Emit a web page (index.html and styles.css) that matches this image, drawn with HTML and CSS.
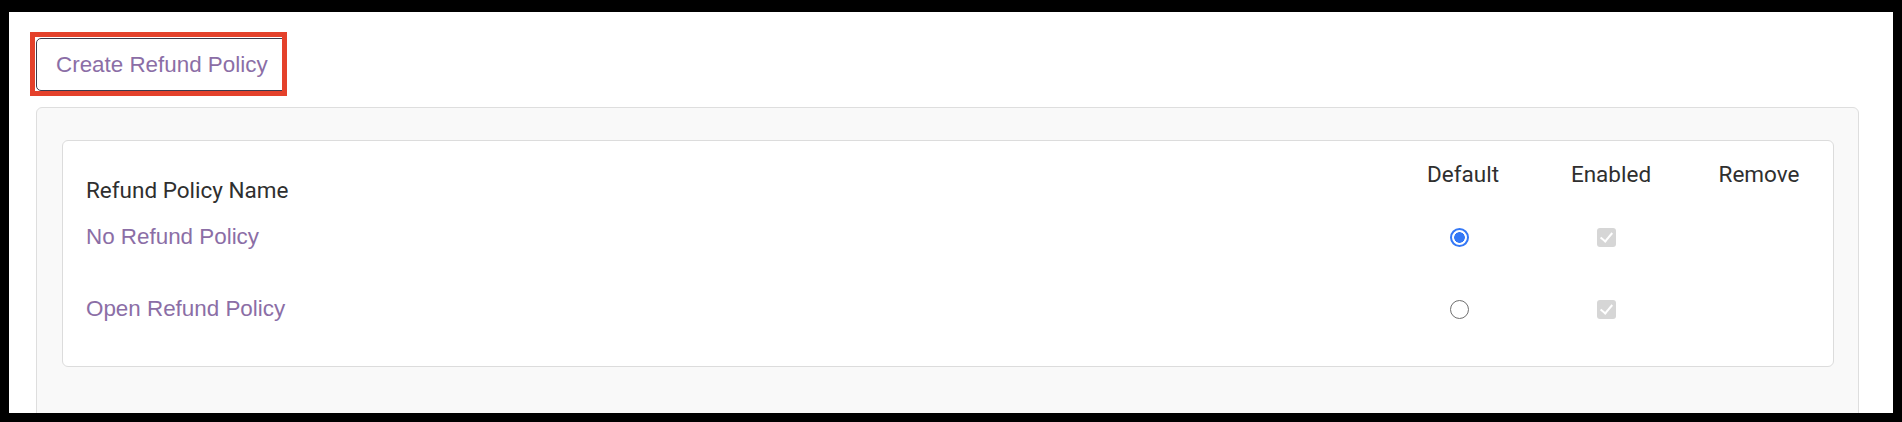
FILE: index.html
```html
<!DOCTYPE html>
<html lang="en">
<head>
<meta charset="utf-8">
<title>Refund Policies</title>
<link rel="stylesheet" href="styles.css">
</head>
<body>
<div class="screen">
  <div class="toolbar">
    <button class="btn-create" type="button">Create Refund Policy</button>
    <span class="highlight"></span>
  </div>
  <div class="panel">
    <div class="card">
      <div class="table">
        <div class="th th-name">Refund Policy Name</div>
        <div class="th th-col">Default</div>
        <div class="th th-col">Enabled</div>
        <div class="th th-col">Remove</div>

        <div class="td td-name"><a href="#" class="policy-link">No Refund Policy</a></div>
        <div class="td td-col"><input type="radio" name="default" class="radio" checked></div>
        <div class="td td-col"><input type="checkbox" class="check" checked disabled></div>
        <div class="td td-col"></div>

        <div class="td td-name"><a href="#" class="policy-link">Open Refund Policy</a></div>
        <div class="td td-col"><input type="radio" name="default" class="radio"></div>
        <div class="td td-col"><input type="checkbox" class="check" checked disabled></div>
        <div class="td td-col"></div>
      </div>
    </div>
  </div>
</div>
</body>
</html>
```

FILE: styles.css
```css
html, body {
  margin: 0;
  padding: 0;
  background: #000;
}

body {
  font-family: "Liberation Sans", Arial, sans-serif;
}

.screen {
  margin: 12px 9px 9px 9px;
  height: 401px;
  background: #fff;
  overflow: hidden;
  box-sizing: border-box;
  padding: 26px 34px 0 27px;
}

.toolbar {
  position: relative;
  display: inline-block;
  vertical-align: top;
}

.btn-create {
  display: block;
  box-sizing: border-box;
  height: 53px;
  padding: 0 18px 0 19px;
  border: 1px solid #3d3a4c;
  border-radius: 5px;
  background: #fff;
  color: #8b6ea6;
  font-family: "Liberation Sans", Arial, sans-serif;
  font-size: 22.4px;
  line-height: 51px;
  cursor: pointer;
}

.highlight {
  position: absolute;
  left: -6px;
  top: -6px;
  width: 257px;
  height: 64px;
  box-sizing: border-box;
  border: 5px solid #e4412b;
  pointer-events: none;
}

.panel {
  margin-top: 16px;
  background: #f9f9f9;
  border: 1px solid #dedede;
  border-radius: 6px;
  padding: 32px 24px 60px 25px;
}

.card {
  background: #fff;
  border: 1px solid #dcdcdc;
  border-radius: 6px;
}

.table {
  display: grid;
  grid-template-columns: 1fr 148px 148px 148px;
  grid-template-rows: 59px 72px 72px;
  padding-bottom: 22px;
}

.th {
  font-family: Roboto, "Liberation Sans", Arial, sans-serif;
  font-size: 22.5px;
  line-height: 26px;
  color: #2f2f2f;
}

.th-name {
  padding: 36px 0 0 23px;
}

.th-col {
  padding-top: 20px;
  text-align: center;
}

.td {
  display: flex;
  align-items: center;
}

.td-name {
  padding-left: 23px;
}

.td-col {
  justify-content: center;
}

.policy-link {
  color: #8b6ea6;
  text-decoration: none;
  font-size: 22.4px;
  line-height: 26px;
  padding-top: 2px;
}

.radio {
  appearance: none;
  -webkit-appearance: none;
  width: 19px;
  height: 19px;
  margin: 3px 7px 0 0;
  border-radius: 50%;
  border: 1.5px solid #6f6f6f;
  background: #fff;
  box-sizing: border-box;
}

.radio:checked {
  border: 2px solid #3478f6;
  background: radial-gradient(circle, #3478f6 0 5px, #fff 5.6px);
}

.check {
  appearance: none;
  -webkit-appearance: none;
  width: 19px;
  height: 19px;
  margin: 3px 9px 0 0;
  border-radius: 3px;
  background: #d6d6d6;
  box-sizing: border-box;
  position: relative;
}

.check:checked::after {
  content: "";
  position: absolute;
  left: 6px;
  top: 2px;
  width: 5px;
  height: 10px;
  border: solid #fff;
  border-width: 0 2.5px 2.5px 0;
  transform: rotate(40deg);
}
```
